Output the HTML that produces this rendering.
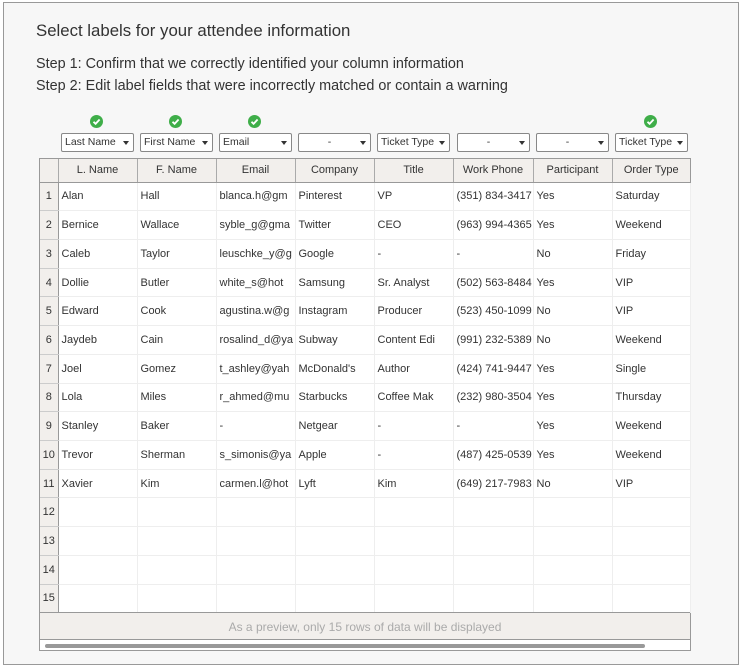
<!DOCTYPE html>
<html><head><meta charset="utf-8"><style>
*{box-sizing:border-box;margin:0;padding:0}
body{width:742px;height:670px;background:#fff;font-family:"Liberation Sans",Arial,sans-serif;position:relative;overflow:hidden;color:#333}
.frame{position:absolute;left:3px;top:2px;width:736px;height:663px;border:1px solid #999;background:#f7f7f7}
.t{position:absolute;left:36px;top:21px;font-size:16.8px;color:#333}
.s{position:absolute;left:36px;font-size:14.4px;color:#333}
.chk{position:absolute;top:115px;width:13px;height:13px;border-radius:50%;background:#3fae49}
.chk svg{position:absolute;left:0;top:0}
.sel{position:absolute;top:133px;width:73px;height:19px;border:1px solid #888;background:#fff;border-radius:2px;font-size:10.5px;line-height:17px;padding-left:3px;color:#333;white-space:nowrap}
.sel:after{content:"";position:absolute;right:4px;top:7px;border-left:3.5px solid transparent;border-right:3.5px solid transparent;border-top:4px solid #333}
.sel.c{text-align:center;padding-left:0;padding-right:10px}
.tbl{position:absolute;left:39px;top:158px;width:652px;height:493px;border:1px solid #999;background:#fff}
table{border-collapse:collapse;position:absolute;left:0;top:0;width:650px;table-layout:fixed;font-size:11px}
th{height:23px;background:#f2efec;font-weight:normal;border-right:1px solid #aaa;border-bottom:1px solid #999;color:#333}
td{height:28.73px;border-right:1px solid #eee;border-bottom:1px solid #eee;padding-left:3px;white-space:nowrap;overflow:hidden;color:#333}
td.n{background:#f2efec;border-right:1px solid #999;padding-left:0;text-align:center;border-bottom:1px solid #ccc}
.foot{position:absolute;left:0;top:453px;width:650px;height:28px;background:#f2efec;border-top:1px solid #999;border-bottom:1px solid #999;text-align:center;font-size:12px;line-height:28px;color:#aaa}
.bar{position:absolute;left:5px;top:485px;width:600px;height:4px;border-radius:2px;background:#999}
</style></head><body>
<div class="frame"></div>
<div class="t">Select labels for your attendee information</div>
<div class="s" style="top:56px">Step 1: Confirm that we correctly identified your column information</div>
<div class="s" style="top:78px">Step 2: Edit label fields that were incorrectly matched or contain a warning</div>
<div class="chk" style="left:90px"><svg width="13" height="13"><path d="M3.5 6.8L5.6 8.8 9.6 4.5" stroke="#fff" stroke-width="1.8" fill="none"/></svg></div>
<div class="chk" style="left:169px"><svg width="13" height="13"><path d="M3.5 6.8L5.6 8.8 9.6 4.5" stroke="#fff" stroke-width="1.8" fill="none"/></svg></div>
<div class="chk" style="left:248px"><svg width="13" height="13"><path d="M3.5 6.8L5.6 8.8 9.6 4.5" stroke="#fff" stroke-width="1.8" fill="none"/></svg></div>
<div class="chk" style="left:644px"><svg width="13" height="13"><path d="M3.5 6.8L5.6 8.8 9.6 4.5" stroke="#fff" stroke-width="1.8" fill="none"/></svg></div>
<div class="sel" style="left:61px">Last Name</div>
<div class="sel" style="left:140px">First Name</div>
<div class="sel" style="left:219px">Email</div>
<div class="sel c" style="left:298px">-</div>
<div class="sel" style="left:377px">Ticket Type</div>
<div class="sel c" style="left:457px">-</div>
<div class="sel c" style="left:536px">-</div>
<div class="sel" style="left:615px">Ticket Type</div>
<div class="tbl">
<table>
<colgroup><col style="width:18px"><col style="width:79px"><col style="width:79px"><col style="width:79px"><col style="width:79px"><col style="width:79px"><col style="width:80px"><col style="width:79px"><col style="width:78px"></colgroup>
<tr><th></th><th>L. Name</th><th>F. Name</th><th>Email</th><th>Company</th><th>Title</th><th>Work Phone</th><th>Participant</th><th style="border-right:none">Order Type</th></tr>
<tr><td class="n">1</td><td>Alan</td><td>Hall</td><td>blanca.h@gm</td><td>Pinterest</td><td>VP</td><td>(351) 834-3417</td><td>Yes</td><td>Saturday</td></tr>
<tr><td class="n">2</td><td>Bernice</td><td>Wallace</td><td>syble_g@gma</td><td>Twitter</td><td>CEO</td><td>(963) 994-4365</td><td>Yes</td><td>Weekend</td></tr>
<tr><td class="n">3</td><td>Caleb</td><td>Taylor</td><td>leuschke_y@g</td><td>Google</td><td>-</td><td>-</td><td>No</td><td>Friday</td></tr>
<tr><td class="n">4</td><td>Dollie</td><td>Butler</td><td>white_s@hot</td><td>Samsung</td><td>Sr. Analyst</td><td>(502) 563-8484</td><td>Yes</td><td>VIP</td></tr>
<tr><td class="n">5</td><td>Edward</td><td>Cook</td><td>agustina.w@g</td><td>Instagram</td><td>Producer</td><td>(523) 450-1099</td><td>No</td><td>VIP</td></tr>
<tr><td class="n">6</td><td>Jaydeb</td><td>Cain</td><td>rosalind_d@ya</td><td>Subway</td><td>Content Edi</td><td>(991) 232-5389</td><td>No</td><td>Weekend</td></tr>
<tr><td class="n">7</td><td>Joel</td><td>Gomez</td><td>t_ashley@yah</td><td>McDonald's</td><td>Author</td><td>(424) 741-9447</td><td>Yes</td><td>Single</td></tr>
<tr><td class="n">8</td><td>Lola</td><td>Miles</td><td>r_ahmed@mu</td><td>Starbucks</td><td>Coffee Mak</td><td>(232) 980-3504</td><td>Yes</td><td>Thursday</td></tr>
<tr><td class="n">9</td><td>Stanley</td><td>Baker</td><td>-</td><td>Netgear</td><td>-</td><td>-</td><td>Yes</td><td>Weekend</td></tr>
<tr><td class="n">10</td><td>Trevor</td><td>Sherman</td><td>s_simonis@ya</td><td>Apple</td><td>-</td><td>(487) 425-0539</td><td>Yes</td><td>Weekend</td></tr>
<tr><td class="n">11</td><td>Xavier</td><td>Kim</td><td>carmen.l@hot</td><td>Lyft</td><td>Kim</td><td>(649) 217-7983</td><td>No</td><td>VIP</td></tr>
<tr><td class="n">12</td><td></td><td></td><td></td><td></td><td></td><td></td><td></td><td></td></tr>
<tr><td class="n">13</td><td></td><td></td><td></td><td></td><td></td><td></td><td></td><td></td></tr>
<tr><td class="n">14</td><td></td><td></td><td></td><td></td><td></td><td></td><td></td><td></td></tr>
<tr><td class="n">15</td><td></td><td></td><td></td><td></td><td></td><td></td><td></td><td></td></tr>
</table>
<div class="foot">As a preview, only 15 rows of data will be displayed</div>
<div class="bar"></div>
</div>
</body></html>
